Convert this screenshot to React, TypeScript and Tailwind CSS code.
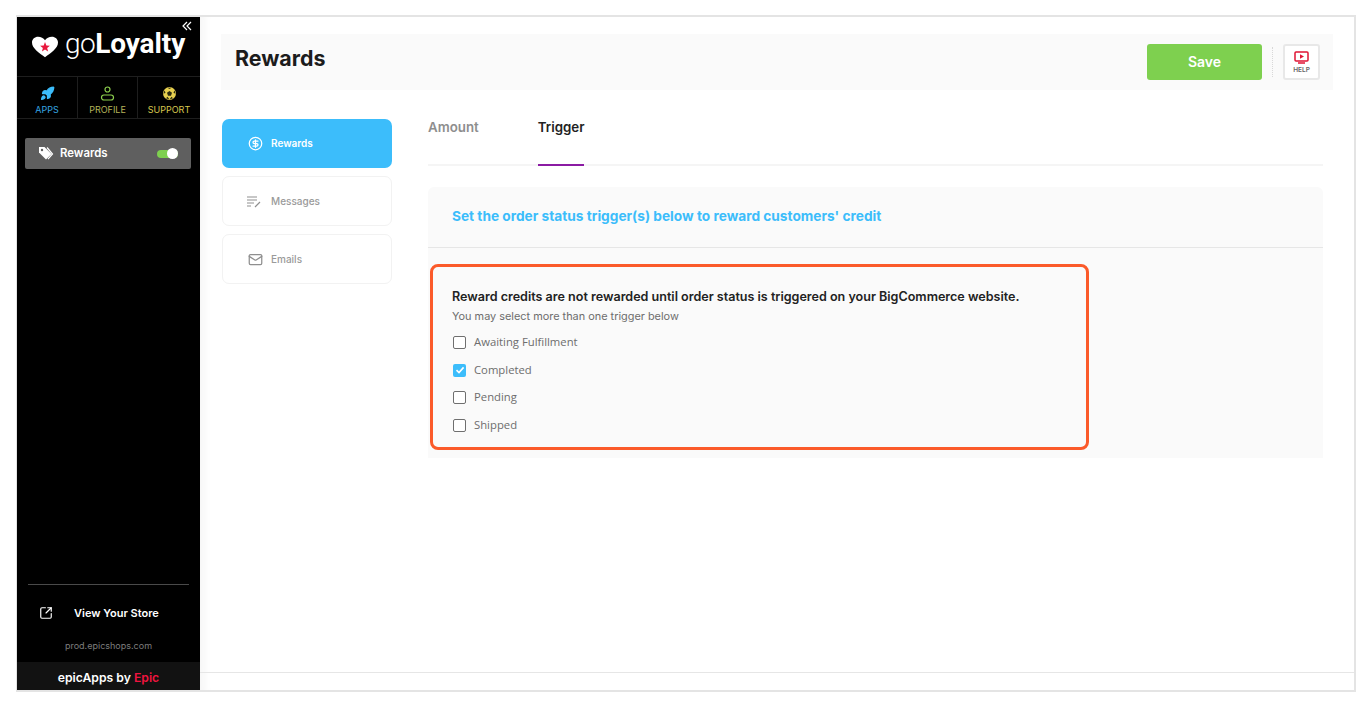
import React from "react";
import { Rocket, SquareArrowOutUpRight, CircleDollarSign, Mail } from "lucide-react";

const f = "font-['Inter','Liberation_Sans',sans-serif]";

function Check({ label, checked }: { label: string; checked?: boolean }) {
  return (
    <div className="flex items-center h-[27.5px]">
      {checked ? (
        <span className="w-[13px] h-[13px] rounded-[2px] bg-[#3cbdfb] flex items-center justify-center">
          <svg width="10" height="10" viewBox="0 0 10 10" fill="none" stroke="#fff" strokeWidth="1.6"><path d="M1.5 5.2 4 7.6 8.6 2.4" /></svg>
        </span>
      ) : (
        <span className="w-[13px] h-[13px] rounded-[2px] border-[1.5px] border-[#6f6f6f] bg-white" />
      )}
      <span className="ml-[8px] text-[11.300px] text-[#6d6d6d] font-['Open_Sans',sans-serif]">{label}</span>
    </div>
  );
}

export default function App() {
  return (
    <div className={`${f} w-[1370px] h-[707px] bg-white pt-[15px] pl-[16px] overflow-hidden`}>
      <div className="w-[1340px] h-[677px] border-2 border-[#e4e4e4] border-l-[1px] flex bg-white">
        {/* Sidebar */}
        <aside className="w-[183px] h-full bg-black flex flex-col shrink-0 relative">
          <svg className="absolute right-[8px] top-[4px]" width="10" height="10" viewBox="0 0 10 10" fill="none" stroke="#fff" strokeWidth="1.2"><path d="M5 1 1 5l4 4M9 1 5 5l4 4" /></svg>
          <div className="h-[59px] flex items-center pl-[15px]">
            <svg width="26" height="22" viewBox="0 0 29 23" className="shrink-0">
              <path d="M14.5 23C8 18 0 13 0 6.5 0 2.5 3.2 0 6.8 0c3.2 0 6 1.6 7.7 4C16.2 1.600 19 0 22.2 0 25.800 0 29 2.500 29 6.500 29 13 21 18 14.500 23Z" fill="#fff" />
              <path d="m14.500 6 1.500 3.800 4 .2-3.100 2.500 1.100 3.900-3.500-2.200-3.400 2.200 1-3.900-3.100-2.500 4.100-.2Z" fill="#e8173c" />
            </svg>
            <span className="ml-[7px] text-[28px] leading-none tracking-[-0.5px] text-white font-['Roboto',sans-serif] font-light -mt-[6px]">go</span>
            <span className="text-[28px] leading-none tracking-[-0.1px] text-white font-bold font-['Roboto',sans-serif] -mt-[6px]">Loyalty</span>
          </div>
          <div className="h-[43px] flex border-y border-[#1e1e1e]">
            <div className="w-[61px] flex flex-col items-center justify-start pt-[9px] border-r border-[#1e1e1e]">
              <Rocket size={15} className="text-[#3cbdfb] fill-[#3cbdfb]" />
              <span className="text-[9px] leading-[11px] mt-[3px] text-[#35a5e0]">APPS</span>
            </div>
            <div className="w-[60px] flex flex-col items-center justify-start pt-[9px] border-r border-[#1e1e1e]">
              <svg width="15" height="15" viewBox="0 0 15 15" fill="none" stroke="#8ccf4d" strokeWidth="1.2"><circle cx="7.500" cy="3.500" r="2.500" /><rect x="1.500" y="9" width="12" height="5" rx="2.500" /></svg>
              <span className="text-[9px] leading-[11px] mt-[3px] text-[#b4b45a]">PROFILE</span>
            </div>
            <div className="flex-1 flex flex-col items-center justify-start pt-[9px]">
              <svg width="15" height="15" viewBox="0 0 15 15">
                <circle cx="7.500" cy="7.500" r="6.500" fill="#e6cf4f" />
                <path d="M7.500 5 10 6.800 9 9.700H6L5 6.800Z" fill="#2a2a10" />
                <path d="M5.500 1.700 7.500 3 9.500 1.700ZM12.700 4.500 11.400 6.500 13.500 8ZM2.300 4.500 3.600 6.500 1.500 8ZM4 12.300 5.500 10.800 7.500 13.500ZM11 12.300 9.500 10.800 7.500 13.500Z" fill="#2a2a10" />
              </svg>
              <span className="text-[9px] leading-[11px] mt-[3px] text-[#d8c84f]">SUPPORT</span>
            </div>
          </div>
          <div className="ml-[8px] mr-[9px] mt-[19px] h-[31px] bg-[#5f5f5f] rounded-[2px] flex items-center pl-[13px] pr-[13px]">
            <svg width="16" height="15" viewBox="0 0 16 15" className="shrink-0">
              <path d="M1 1h5.500l7 7-5.500 5.500-7-7Z" fill="#fff" />
              <path d="M9 1.500l5.500 6.500-4.500 5.200" fill="none" stroke="#fff" strokeWidth="1.200" />
              <circle cx="4" cy="4" r="1.200" fill="#5f5f5f" />
            </svg>
            <span className="ml-[6px] text-[11.400px] font-semibold text-white">Rewards</span>
            <span className="ml-auto w-[21px] h-[8px] rounded-full bg-[#7ed04f] relative">
              <span className="absolute right-0 -top-[2px] w-[11px] h-[11px] rounded-full bg-white" />
            </span>
          </div>
          <div className="mt-auto">
            <div className="mx-[11px] border-t border-[#4a4a4a]" />
            <div className="h-[56px] flex items-center pl-[22px]">
              <SquareArrowOutUpRight size={14} className="text-white" />
              <span className="ml-[21px] text-[11px] font-semibold text-white">View Your Store</span>
            </div>
            <div className="text-center text-[9px] text-[#7d7d7d] h-[21px] leading-[10px]">prod.epicshops.com</div>
            <div className="h-[28px] bg-[#121212] flex items-center justify-center pt-[4px] text-[12.200px] font-semibold text-white">
              epicApps by&nbsp;<span className="text-[#f0143f]">Epic</span>
            </div>
          </div>
        </aside>
        {/* Main */}
        <main className="flex-1 flex flex-col min-w-0 shadow-[inset_12px_0_10px_-8px_#f5f5f5]">
          <div className="flex-1 pl-[21px] pr-[21px] pt-[17px]">
            <header className="h-[56px] bg-[#fafafa] flex items-center pl-[14px] w-[1112px]">
              <h1 className="text-[21.400px] font-bold text-[#1c1c1c] -mt-[7px]">Rewards</h1>
              <button className="ml-auto w-[115px] h-[36px] pb-[2px] bg-[#7ed04f] rounded-[3px] text-white text-[14px] font-semibold">Save</button>
              <div className="mx-[10px] h-[30px] border-l border-dotted border-[#d8d8d8]" />
              <div className="w-[37px] h-[36px] mr-[13px] border-2 border-[#e8e8e8] rounded-[3px] flex flex-col items-center justify-center bg-white">
                <svg width="15" height="13" viewBox="0 0 15 13" fill="none"><rect x="1" y="1" width="13" height="9" rx="1" stroke="#e01535" strokeWidth="1.500" /><path d="M6 3.200 10 5.500 6 7.800Z" fill="#e01535" /><path d="M4 12h7" stroke="#e01535" strokeWidth="1.500" /></svg>
                <span className="text-[6.500px] leading-[8px] mt-[2px] font-semibold text-[#666]">HELP</span>
              </div>
            </header>
            <div className="flex mt-[29px]">
              <nav className="w-[171px] shrink-0 flex flex-col">
                <div className="h-[49px] ml-[1px] rounded-[7px] bg-[#3cbdfb] flex items-center pl-[26px] text-white">
                  <CircleDollarSign size={15} />
                  <span className="ml-[8px] text-[10px] font-semibold">Rewards</span>
                </div>
                <div className="h-[50px] mt-[8px] ml-[1px] rounded-[7px] border border-[#f2f2f2] flex items-center pl-[23px] text-[#9a9a9a]">
                  <svg width="16" height="13" viewBox="0 0 16 13" fill="none" stroke="#8f8f8f" strokeWidth="1.200"><path d="M1 2h10M1 5h10M1 8h7M1 11h4M9 12l5-5" /></svg>
                  <span className="ml-[9px] text-[10px] font-medium">Messages</span>
                </div>
                <div className="h-[50px] mt-[8px] ml-[1px] rounded-[7px] border border-[#f2f2f2] flex items-center pl-[25px] text-[#9a9a9a]">
                  <Mail size={15} className="text-[#8f8f8f]" />
                  <span className="ml-[8px] text-[10px] font-medium">Emails</span>
                </div>
              </nav>
              <section className="ml-[36px] w-[895px]">
                <div className="h-[47px] border-b-2 border-[#f5f5f5] flex text-[13.300px] font-semibold">
                  <span className="text-[#8e8e8e] leading-[16px]">Amount</span>
                  <span className="ml-[59px] text-[#222] leading-[16px] h-[47px] inline-block border-b-2 border-[#8b1ba3]">Trigger</span>
                </div>
                <div className="mt-[21px] h-[271px] bg-[#fafafa] rounded-t-[6px]">
                  <div className="h-[61px] pb-[2px] border-b border-[#e6e6e6] pl-[24px] flex items-center text-[13.700px] font-bold text-[#3cbdfb]">
                    Set the order status trigger(s) below to reward customers' credit
                  </div>
                  <div className="ml-[2px] mt-[16px] w-[659px] h-[186px] border-[3px] border-[#fb5a2a] rounded-[8px] pl-[19px] pt-[22px]">
                    <p className="text-[12.550px] font-semibold text-[#222] leading-[16px]">Reward credits are not rewarded until order status is triggered on your BigCommerce website.</p>
                    <p className="text-[10.900px] text-[#6d6d6d] leading-[14px] mt-[4px] mb-[6px]">You may select more than one trigger below</p>
                    <div className="pl-[1px]">
                      <Check label="Awaiting Fulfillment" />
                      <Check label="Completed" checked />
                      <Check label="Pending" />
                      <Check label="Shipped" />
                    </div>
                  </div>
                </div>
              </section>
            </div>
          </div>
          <div className="h-[18px] border-t border-[#e6e6e6]" />
        </main>
      </div>
    </div>
  );
}
